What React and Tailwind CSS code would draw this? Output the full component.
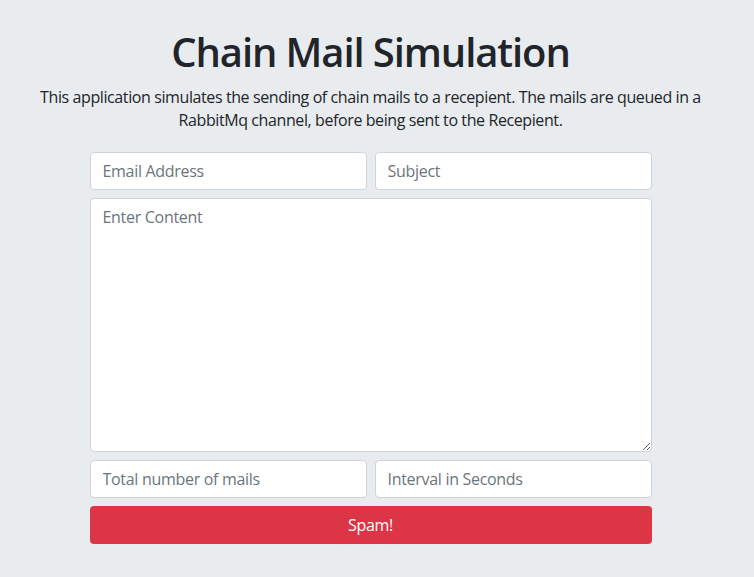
export default function App() {
    return (
        <div className="min-h-[577px] bg-[#e9ecef] text-[#212529] font-['Open_Sans',sans-serif]">
            <div className="w-[741px]">

                <div className="pt-[28px] text-center">
                    <h1 className="text-[40px] leading-[48px] font-semibold tracking-[-1.1px]">
                        Chain Mail Simulation
                    </h1>
                    <p className="mt-[10px] text-[16px] leading-[23px] tracking-[-0.4px]">
                        This application simulates the sending of chain mails to a recepient. The mails are queued in a
                        <br />
                        RabbitMq channel, before being sent to the Recepient.
                    </p>
                </div>

                <form className="mx-auto mt-[20px] w-[562px] flex flex-col gap-2">

                    <div className="grid grid-cols-2 gap-2">
                        <input
                            type="text"
                            placeholder="Email Address"
                            className="h-[38px] px-3 bg-white border border-[#ced4da] rounded text-[16px] tracking-[-0.3px] placeholder:text-[#6c757d] outline-none"
                        />
                        <input
                            type="text"
                            placeholder="Subject"
                            className="h-[38px] px-3 bg-white border border-[#ced4da] rounded text-[16px] tracking-[-0.3px] placeholder:text-[#6c757d] outline-none"
                        />
                    </div>

                    <textarea
                        placeholder="Enter Content"
                        className="h-[254px] px-3 py-[6px] bg-white border border-[#ced4da] rounded text-[16px] leading-[24px] tracking-[-0.3px] placeholder:text-[#6c757d] outline-none"
                    />

                    <div className="grid grid-cols-2 gap-2">
                        <input
                            type="text"
                            placeholder="Total number of mails"
                            className="h-[38px] px-3 bg-white border border-[#ced4da] rounded text-[16px] tracking-[-0.3px] placeholder:text-[#6c757d] outline-none"
                        />
                        <input
                            type="text"
                            placeholder="Interval in Seconds"
                            className="h-[38px] px-3 bg-white border border-[#ced4da] rounded text-[16px] tracking-[-0.3px] placeholder:text-[#6c757d] outline-none"
                        />
                    </div>

                    <button
                        type="button"
                        className="h-[38px] bg-[#dc3545] text-white text-[16px] tracking-[-0.3px] rounded"
                    >
                        Spam!
                    </button>

                </form>
            </div>
        </div>
    );
}
